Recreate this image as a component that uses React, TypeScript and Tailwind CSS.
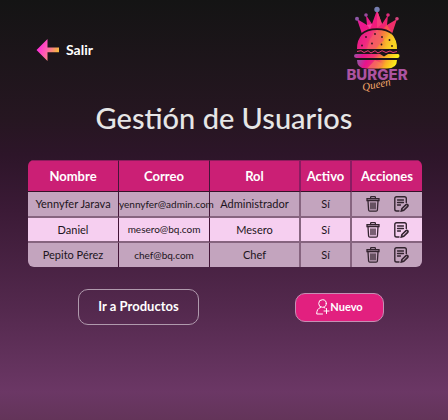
import React from "react";

type User = { name: string; email: string; role: string; active: string };

const users: User[] = [
  { name: "Yennyfer Jarava", email: "yennyfer@admin.com", role: "Administrador", active: "Sí" },
  { name: "Daniel", email: "mesero@bq.com", role: "Mesero", active: "Sí" },
  { name: "Pepito Pérez", email: "chef@bq.com", role: "Chef", active: "Sí" },
];

function ArrowIcon() {
  return (
    <svg width="24" height="24" viewBox="0 0 24 24" aria-hidden="true">
      <defs>
        <linearGradient id="arrow" x1="0" y1="0.3" x2="1" y2="0.7">
          <stop offset="0.1" stopColor="#ff2fd6" />
          <stop offset="0.45" stopColor="#ff5fae" />
          <stop offset="0.9" stopColor="#f5b642" />
        </linearGradient>
      </defs>
      <path d="M0.5 12L11.5 1V9.5H23V14.2H11.5V23Z" fill="url(#arrow)" />
    </svg>
  );
}

function Logo() {
  return (
    <svg width="64" height="92" viewBox="0 0 64 92" role="img" aria-label="Burger Queen">
      <defs>
        <linearGradient id="crown" x1="0" y1="0" x2="1" y2="0.4">
          <stop offset="0" stopColor="#b53aa0" />
          <stop offset="0.3" stopColor="#ec1690" />
          <stop offset="0.65" stopColor="#f01c78" />
          <stop offset="1" stopColor="#ee2f68" />
        </linearGradient>
        <linearGradient id="bun" x1="0" y1="0" x2="1" y2="0.2">
          <stop offset="0" stopColor="#e3128d" />
          <stop offset="0.35" stopColor="#f02a80" />
          <stop offset="0.65" stopColor="#f5793f" />
          <stop offset="1" stopColor="#f9e41c" />
        </linearGradient>
        <linearGradient id="base" x1="0" y1="0" x2="1" y2="0.1">
          <stop offset="0" stopColor="#8f5aa8" />
          <stop offset="0.25" stopColor="#e8128c" />
          <stop offset="0.5" stopColor="#f0366e" />
          <stop offset="0.75" stopColor="#f9b025" />
          <stop offset="1" stopColor="#fbee1b" />
        </linearGradient>
      </defs>
      <g fill="url(#crown)">
        <path d="M17 34L12 19L22 25L21 15L27 24L32 10L37 24L43 15L42 25L52 19L47 34Z" />
        <path d="M32 10L37 24L32 28Z" fill="#f43a7b" />
        <path d="M22 25L27 24L25 29Z" fill="#f4479f" />
        <path d="M42 25L47 33L39 28Z" fill="#f7554e" />
      </g>
      <circle cx="32" cy="9.5" r="2.7" fill="#777fb0" />
      <circle cx="12" cy="18.7" r="2" fill="#8f57a6" />
      <circle cx="21" cy="15" r="1.8" fill="#9a4b9f" />
      <circle cx="43" cy="15" r="1.8" fill="#df2b7c" />
      <circle cx="52" cy="18.7" r="1.8" fill="#d6447e" />
      <path d="M12 49Q12 29.500 32 29.500Q52 29.500 52 49" fill="none" stroke="#1d1419" strokeWidth="2.600" />
      <path d="M12 49Q12 30 32 30Q52 30 52 49Z" fill="url(#bun)" />
      <path d="M32 30L39 40L30 49H22L25 39Z" fill="#f35a69" opacity="0.7" />
      <path d="M39 40L46 33Q51 38 52 49H43Z" fill="#f9c22a" opacity="0.45" />
      <g fill="#2a141f">
        {[[21, 37], [30, 34], [37, 37], [44.5, 40], [17, 45.5], [27, 43.5], [36.5, 44.5], [47, 46]].map(([x, y]) => (
          <circle key={`${x}-${y}`} cx={x} cy={y} r="0.9" />
        ))}
      </g>
      <path d="M12 51.5L16 50.700L19 52.5L23 50.700L26 53L30 50.700L33 53L37 50.700L41 52.500L45 51L48 52.5L52 51.5" fill="none" stroke="#ef3b78" strokeWidth="1" />
      <path d="M11 54H35L39 56.5L43 54H53Q54.500 54 54.500 56T52.500 58H11.500Q9 58 9 56T11 54Z" fill="url(#base)" />
      <path d="M12 60H52Q52 68.500 42 68.500H21Q12 68.500 12 60Z" fill="url(#base)" />
      <path d="M30 60L38 64L34 68.500H22Z" fill="#fb8f53" opacity="0.5" />
      <text x="32" y="80" textAnchor="middle" fill="#ad53a0" className="font-['Inter',sans-serif] text-[15px] font-extrabold">
        BURGER
      </text>
      <text x="18" y="91" transform="rotate(-12 18 91)" fill="#f3a869" className="font-['Liberation_Serif',serif] text-[11px] italic">
        Queen
      </text>
    </svg>
  );
}

function TrashIcon() {
  return (
    <svg width="14" height="16" viewBox="0 0 14 16" fill="none" stroke="#33242f" strokeWidth="1.3" strokeLinecap="round" aria-hidden="true">
      <path d="M4.600 2.500V1.400Q4.600 0.700 5.300 0.700H8.700Q9.400 0.700 9.400 1.400V2.500" />
      <path d="M1 2.700H13V4.500H1Z" />
      <path d="M2 5L2.600 14Q2.700 15.200 3.900 15.200H10.100Q11.300 15.200 11.400 14L12 5" />
      <path d="M5 7V12.800M7 7V12.800M9 7V12.800" />
    </svg>
  );
}

function EditIcon() {
  return (
    <svg width="15" height="16" viewBox="0 0 15 16" fill="none" stroke="#33242f" strokeWidth="1.4" strokeLinecap="round" aria-hidden="true">
      <path d="M12.300 6.500V2.600Q12.300 0.800 10.500 0.800H2.600Q0.800 0.800 0.800 2.600V13.200Q0.800 15 2.600 15H5" />
      <path d="M3.500 4H9.500M3.500 6.500H9.500M3.500 9H6.500" strokeWidth="1.300" />
      <path d="M8 12.500L12 8.600Q12.800 8 13.600 8.700T13.700 10.400L9.700 14.300L7.300 15Z" strokeWidth="1.600" />
    </svg>
  );
}

function AddUserIcon() {
  return (
    <svg width="14" height="16" viewBox="0 0 14 16" fill="none" stroke="#fff" strokeWidth="1" strokeLinecap="round" aria-hidden="true">
      <circle cx="6.500" cy="4.500" r="3.800" />
      <path d="M4.500 8.500Q0.700 9.500 0.700 15H6.500M8 8.500L9 9M10.500 9.500V14.500M8 12H13" />
    </svg>
  );
}

const thinLine = "border-r border-r-[#431538]";
const wideLine = "border-r-2 border-r-[#8a1c62]";
const wideBodyLine = "border-r-2 border-r-[#86647f]";

export default function App() {
  return (
    <main className="min-h-screen bg-[linear-gradient(to_bottom,#141414_0px,#261621_120px,#2d1529_155px,#3b1a36_210px,#54294e_310px,#6b3765_392px,#633459_420px)] font-['Lato','Noto_Sans',sans-serif] text-white">
      <header className="flex items-start justify-between pl-9 pr-[39px]">
        <a href="#salir" className="mt-[38px] flex items-center gap-1.5 text-[14px] font-bold leading-6">
          <ArrowIcon />
          Salir
        </a>
        <Logo />
      </header>

      <h1 className="mt-2 text-center text-[29px] font-medium leading-9 text-[#e6e6e6]">Gestión de Usuarios</h1>

      <section className="mt-6 pl-7 pr-[26px]">
        <div className="overflow-hidden rounded-md">
          <table className="w-full table-fixed border-separate border-spacing-0 whitespace-nowrap text-center">
            <colgroup>
              <col className="w-[91px]" />
              <col className="w-[91px]" />
              <col className="w-[91px]" />
              <col className="w-[51px]" />
              <col className="w-[70px]" />
            </colgroup>
            <thead className="bg-[#cb1f75] text-[13px] leading-[30px]">
              <tr className="*:border-b *:border-t *:border-b-[#351129] *:border-t-[#8e1b5d] *:p-0 *:font-bold">
                <th className={thinLine}>Nombre</th>
                <th className={thinLine}>Correo</th>
                <th className={wideLine}>Rol</th>
                <th className={wideLine}>Activo</th>
                <th>Acciones</th>
              </tr>
            </thead>
            <tbody className="text-[11px] leading-6 text-[#1c1420]">
              {users.map((u) => (
                <tr
                  key={u.email}
                  className="bg-[#c3a4be] *:h-[26px] *:border-b-2 *:border-b-[#86647f] *:p-0 even:bg-[#f6cff0] even:*:h-[25px] even:*:leading-[23px] last:*:h-6 last:*:border-b-0"
                >
                  <td className={thinLine}>{u.name}</td>
                  <td className={`text-[10px] ${thinLine}`}>{u.email}</td>
                  <td className={wideBodyLine}>{u.role}</td>
                  <td className={wideBodyLine}>{u.active}</td>
                  <td>
                    <div className="flex items-center justify-center gap-3.5">
                      <button type="button" aria-label={`Eliminar ${u.name}`}>
                        <TrashIcon />
                      </button>
                      <button type="button" aria-label={`Editar ${u.name}`}>
                        <EditIcon />
                      </button>
                    </div>
                  </td>
                </tr>
              ))}
            </tbody>
          </table>
        </div>
      </section>

      <div className="mt-[22px] flex items-center justify-around pl-[30px] pr-4">
        <button type="button" className="h-9 w-[121px] rounded-[10px] border border-[#b09aad] text-[13px] font-bold">
          Ir a Productos
        </button>
        <button
          type="button"
          className="flex h-[29px] w-[89px] items-center justify-center rounded-[10px] border border-[#c58fb4] bg-[#e2207f] text-[11px] font-bold"
        >
          <AddUserIcon />
          Nuevo
        </button>
      </div>
    </main>
  );
}
